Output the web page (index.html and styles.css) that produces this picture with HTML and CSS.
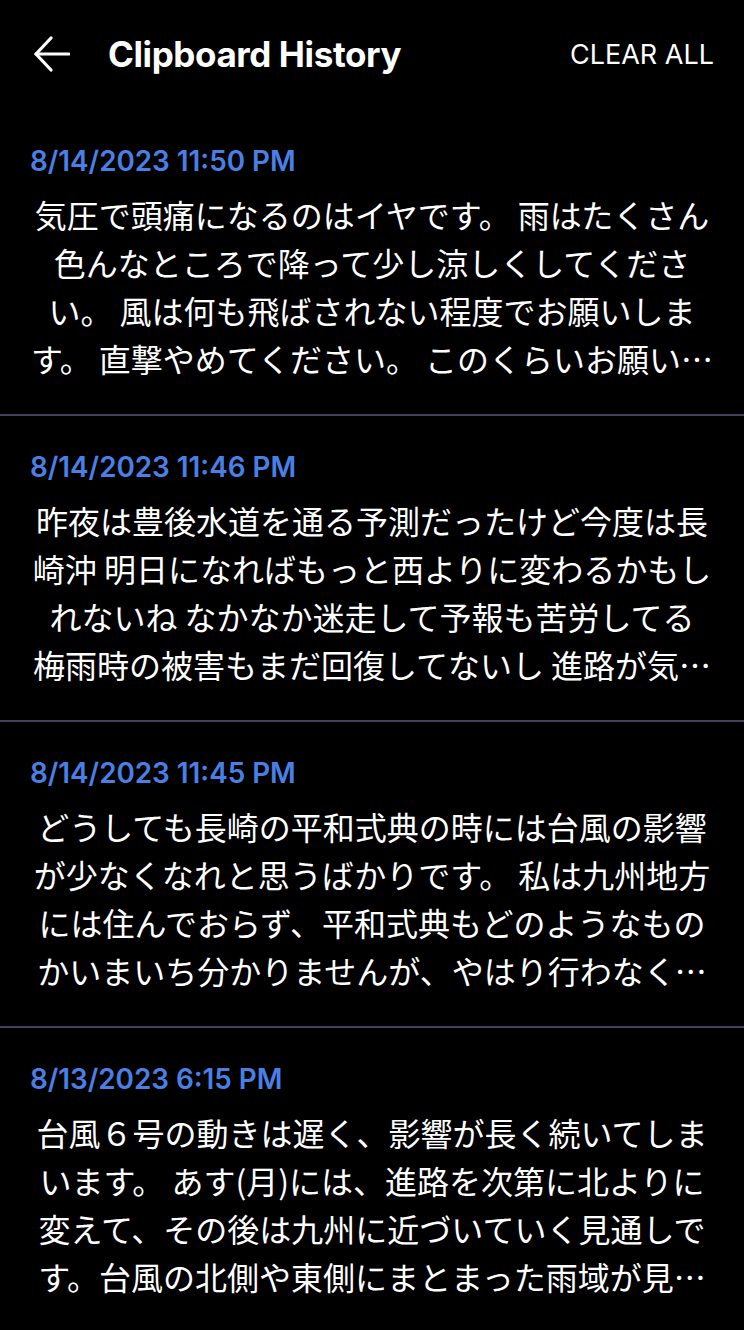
FILE: index.html
```html
<!DOCTYPE html>
<html lang="ja">
<head>
<meta charset="utf-8">
<title>Clipboard History</title>
<link rel="stylesheet" href="styles.css">
</head>
<body>
<div class="app">
  <header class="topbar">
    <div class="topbar-left">
      <button class="back" aria-label="Back">
        <svg width="36" height="36" viewBox="0 0 36 36" fill="none" stroke="#fff" stroke-width="3.2" stroke-linecap="round" stroke-linejoin="round">
          <path d="M35 18H2"/>
          <path d="M17 2L2 18L17 34"/>
        </svg>
      </button>
      <h1 class="title">Clipboard History</h1>
    </div>
    <button class="clear">CLEAR ALL</button>
  </header>
  <ul class="list">
    <li class="item">
      <div class="date">8/14/2023 11:50 PM</div>
      <p class="text">気圧で頭痛になるのはイヤです。 雨はたくさん色んなところで降って少し涼しくしてください。 風は何も飛ばされない程度でお願いします。 直撃やめてください。 このくらいお願いします。よろしくお願いします。</p>
    </li>
    <li class="item">
      <div class="date">8/14/2023 11:46 PM</div>
      <p class="text">昨夜は豊後水道を通る予測だったけど今度は長崎沖 明日になればもっと西よりに変わるかもしれないね なかなか迷走して予報も苦労してる 梅雨時の被害もまだ回復してないし 進路が気になるところです。</p>
    </li>
    <li class="item">
      <div class="date">8/14/2023 11:45 PM</div>
      <p class="text">どうしても長崎の平和式典の時には台風の影響が少なくなれと思うばかりです。 私は九州地方には住んでおらず、平和式典もどのようなものかいまいち分かりませんが、やはり行わなくてはならないものだと思います。</p>
    </li>
    <li class="item">
      <div class="date">8/13/2023 6:15 PM</div>
      <p class="text">台風６号の動きは遅く、影響が長く続いてしまいます。 あす(月)には、進路を次第に北よりに変えて、その後は九州に近づいていく見通しです。台風の北側や東側にまとまった雨域が見込まれます。</p>
    </li>
  </ul>
</div>
</body>
</html>
```
FILE: styles.css
```css
* { box-sizing: border-box; }
html, body {
  margin: 0;
  padding: 0;
  background: #000;
}
body {
  width: 744px;
  height: 1330px;
  overflow: hidden;
  font-family: Inter, "Noto Sans CJK JP", sans-serif;
  color: #fff;
}
.topbar {
  height: 110px;
  display: flex;
  align-items: center;
  justify-content: space-between;
  padding: 0 30px 2px 34px;
}
.topbar-left {
  display: flex;
  align-items: center;
  gap: 38px;
}
.back {
  background: none;
  border: 0;
  padding: 0;
  width: 36px;
  height: 36px;
  display: flex;
}
.title {
  margin: 0;
  font-size: 35px;
  font-weight: 700;
  letter-spacing: -0.4px;
  color: #fff;
}
.clear {
  background: none;
  border: 0;
  padding: 0;
  color: #fff;
  font-family: Inter, sans-serif;
  font-size: 27px;
  font-weight: 400;
}
.list {
  list-style: none;
  margin: 0;
  padding: 0;
}
.item {
  padding: 35px 30px 32px;
  border-bottom: 2px solid #3d4559;
}
.date {
  font-size: 27.8px;
  line-height: 32px;
  font-weight: 600;
  color: #4a80e6;
  margin-bottom: 13px;
}
.text {
  margin: 0;
  font-family: "Noto Sans CJK JP", sans-serif;
  font-size: 32px;
  line-height: 48px;
  text-align: center;
  display: -webkit-box;
  -webkit-box-orient: vertical;
  -webkit-line-clamp: 4;
  overflow: hidden;
}
```
